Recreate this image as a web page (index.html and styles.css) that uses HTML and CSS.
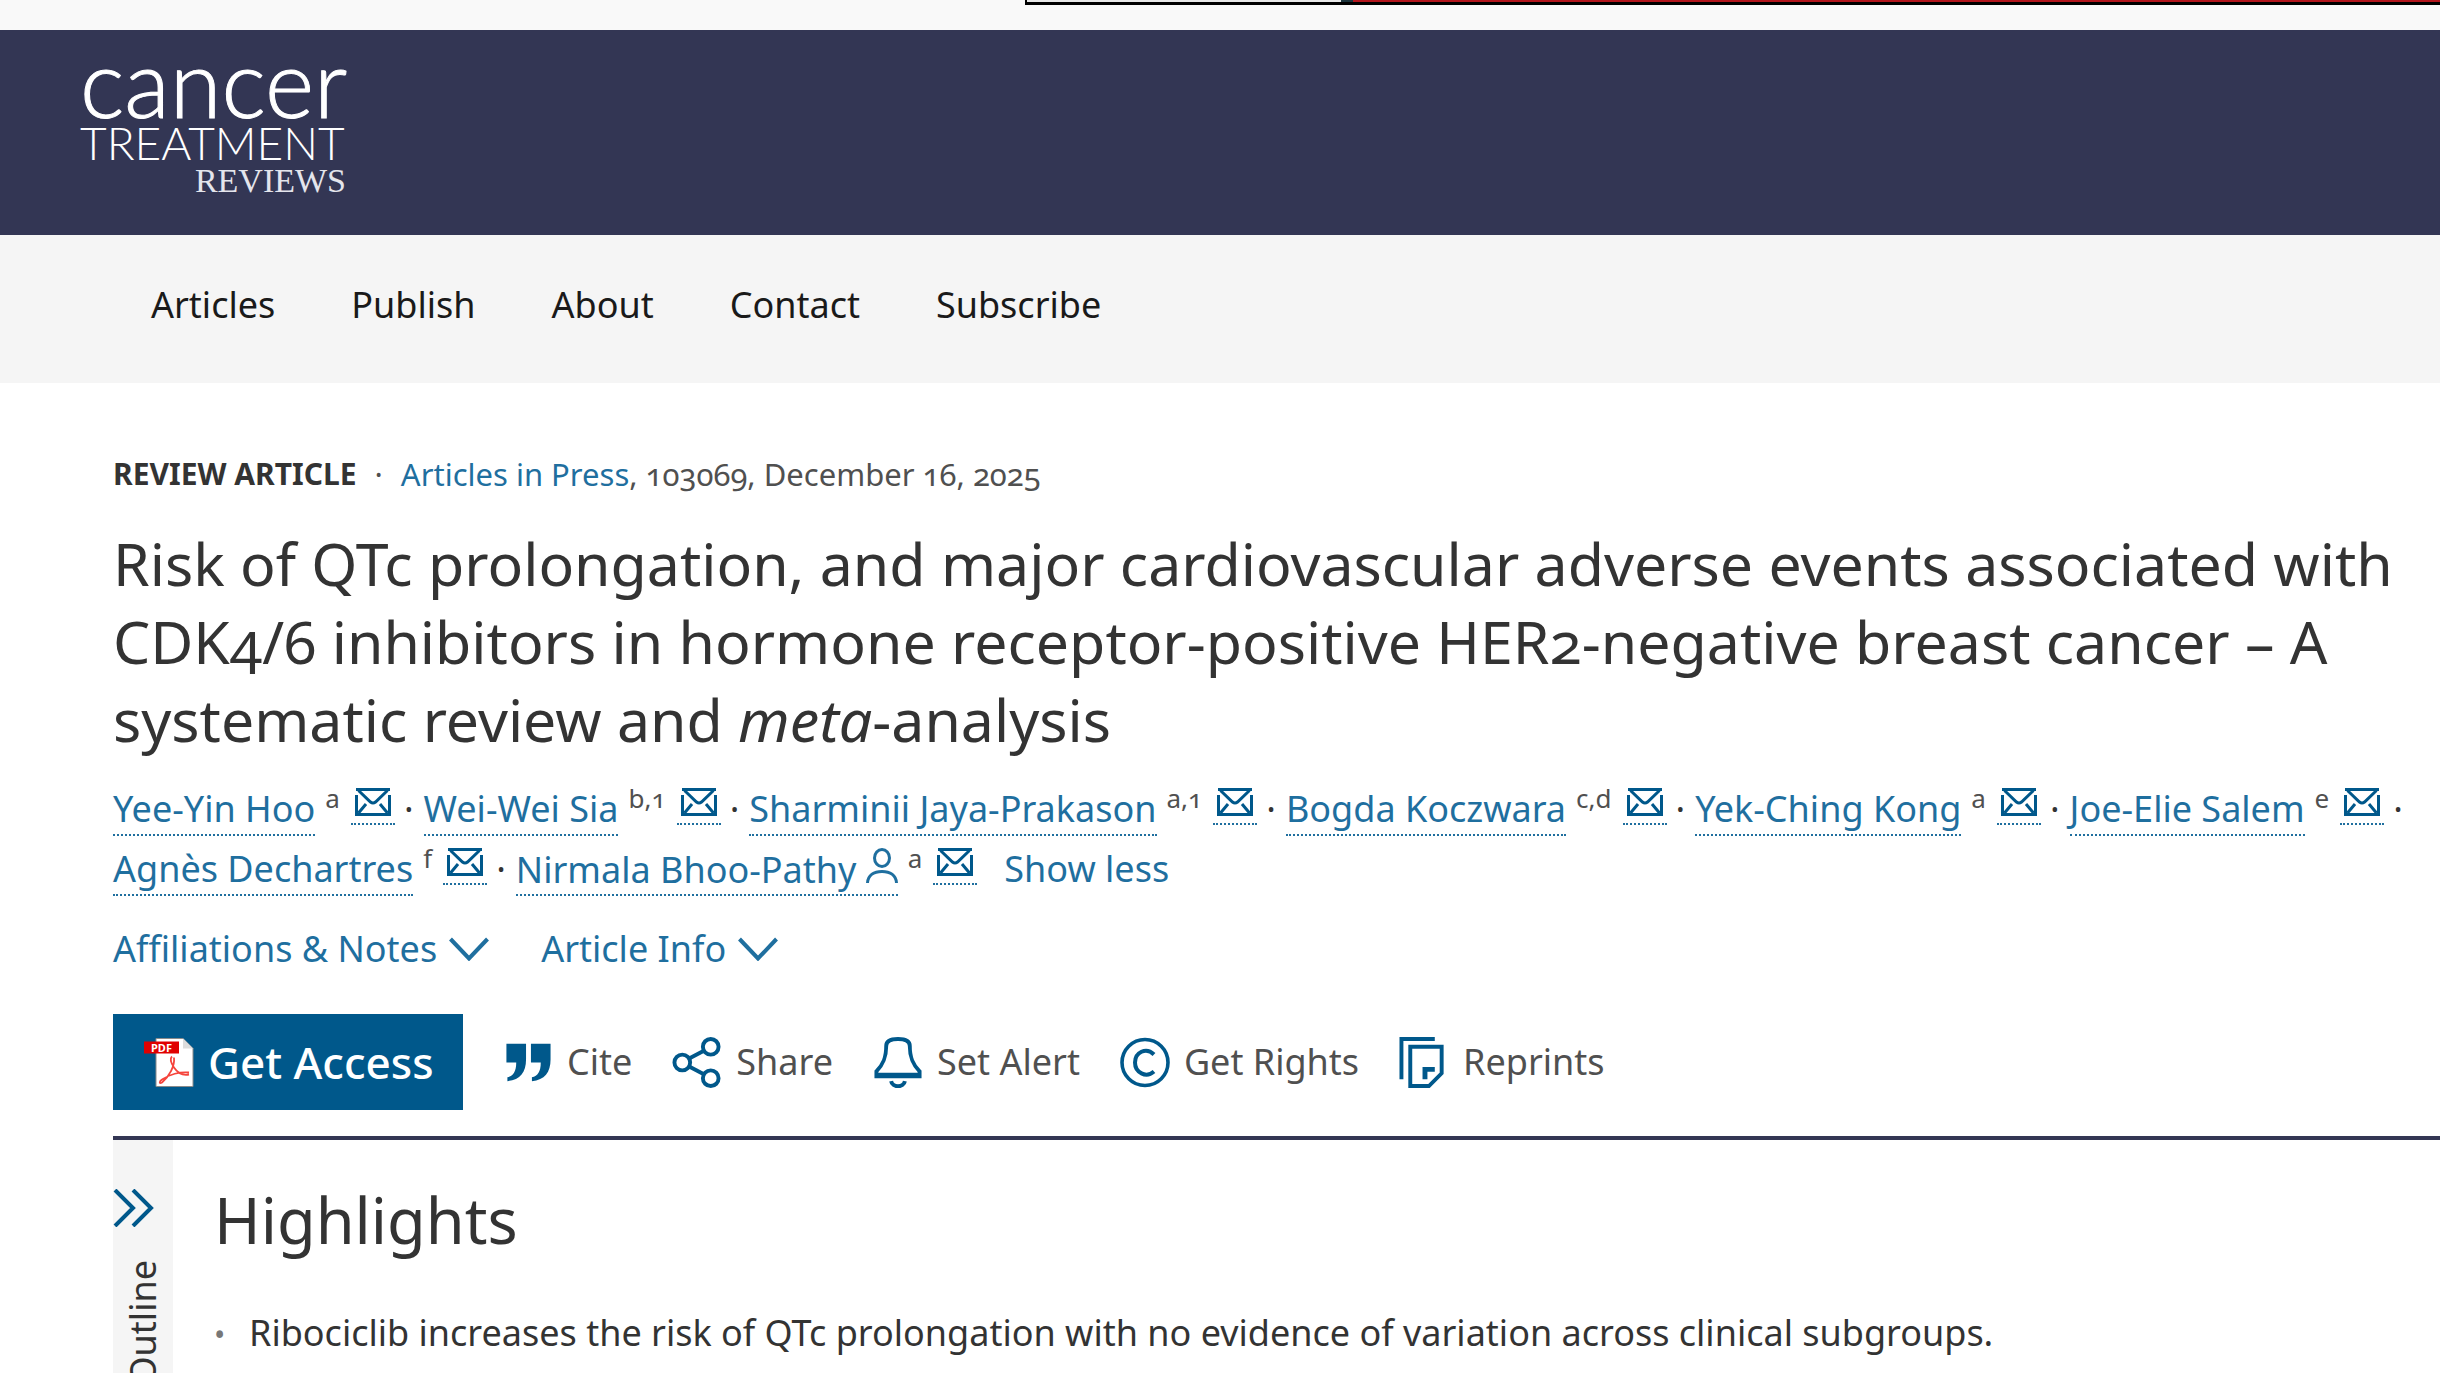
FILE: index.html
```html
<!DOCTYPE html>
<html lang="en">
<head>
<meta charset="utf-8">
<title>Cancer Treatment Reviews</title>
<link rel="stylesheet" href="styles.css">
</head>
<body>
<svg class="sprite" aria-hidden="true">
  <symbol id="mail" viewBox="0 0 36 28">
    <path d="M1.500 7v19.500h33V7M1 1.500h34M3.500 2.500 15.500 14q2.500 2 5 0L32.500 2.500M3.500 25 11 16M32.500 25 25 16" fill="none" stroke="currentColor" stroke-width="3"/>
  </symbol>
  <symbol id="person" viewBox="0 0 32 36">
    <ellipse cx="16" cy="10" rx="7.500" ry="8.500" fill="none" stroke="currentColor" stroke-width="3"/>
    <path d="M1.500 35C2 27 8 23.500 16 23.500S30 27 30.500 35" fill="none" stroke="currentColor" stroke-width="3"/>
  </symbol>
  <symbol id="chevron" viewBox="0 0 40 24">
    <path d="M1.500 2 20 21.500 38.500 2" fill="none" stroke="currentColor" stroke-width="4"/>
  </symbol>
</svg>
<div class="ad-strip"><div class="ad"><div class="ad-light"></div><div class="ad-dark"></div><div class="ad-red"></div></div></div>
<header class="masthead">
  <a class="logo" href="#"><span class="logo-cancer">cancer</span><span class="logo-treatment">TREATMENT</span><span class="logo-reviews">REVIEWS</span></a>
</header>
<nav class="menu">
  <a href="#">Articles</a><a href="#">Publish</a><a href="#">About</a><a href="#">Contact</a><a href="#">Subscribe</a>
</nav>
<main class="article">
  <p class="meta"><strong>REVIEW ARTICLE</strong><span class="meta-dot">·</span><span><a href="#">Articles in Press</a>, 103069, December 16, 2025</span></p>
  <h1>Risk of QTc prolongation, and major cardiovascular adverse events associated with CDK4/6 inhibitors in hormone receptor-positive HER2-negative breast cancer – A systematic review and <em>meta</em>-analysis</h1>
  <ul class="authors">
    <li><a class="name" href="#">Yee-Yin Hoo</a><sup>a</sup><a class="mail" href="#" aria-label="Email"><svg><use href="#mail"/></svg></a><span class="dot">·</span></li>
    <li><a class="name" href="#">Wei-Wei Sia</a><sup>b,1</sup><a class="mail" href="#" aria-label="Email"><svg><use href="#mail"/></svg></a><span class="dot">·</span></li>
    <li><a class="name" href="#">Sharminii Jaya-Prakason</a><sup>a,1</sup><a class="mail" href="#" aria-label="Email"><svg><use href="#mail"/></svg></a><span class="dot">·</span></li>
    <li><a class="name" href="#">Bogda Koczwara</a><sup>c,d</sup><a class="mail" href="#" aria-label="Email"><svg><use href="#mail"/></svg></a><span class="dot">·</span></li>
    <li><a class="name" href="#">Yek-Ching Kong</a><sup>a</sup><a class="mail" href="#" aria-label="Email"><svg><use href="#mail"/></svg></a><span class="dot">·</span></li>
    <li><a class="name" href="#">Joe-Elie Salem</a><sup>e</sup><a class="mail" href="#" aria-label="Email"><svg><use href="#mail"/></svg></a><span class="dot">·</span></li>
    <li><a class="name" href="#">Agnès Dechartres</a><sup>f</sup><a class="mail" href="#" aria-label="Email"><svg><use href="#mail"/></svg></a><span class="dot">·</span></li>
    <li><a class="name" href="#">Nirmala Bhoo-Pathy <svg class="person"><use href="#person"/></svg></a><sup>a</sup><a class="mail" href="#" aria-label="Email"><svg><use href="#mail"/></svg></a></li>
    <li class="less"><button type="button">Show less</button></li>
  </ul>
  <div class="toggles">
    <button type="button">Affiliations &amp; Notes<svg><use href="#chevron"/></svg></button>
    <button type="button">Article Info<svg><use href="#chevron"/></svg></button>
  </div>
  <div class="actions">
    <button type="button" class="access">
      <svg class="pdf" viewBox="0 0 50 50">
        <path d="M12 1h27l10 10v38H12z" fill="#fff" stroke="#8a8a8a"/>
        <path d="M39 1v10h10z" fill="#dcdcdc"/>
        <path d="M0 4h35v12H0z" fill="#e00000"/>
        <text x="7" y="14" font-size="11" font-weight="700" fill="#fff">PDF</text>
        <path d="M28 19c-3 3 0 8 2 11 4 6 10 8 15 7M30 20c1 9-5 19-12 25-3 2-3-1 0-3 7-5 18-8 27-7" fill="none" stroke="#f5443c" stroke-width="1.800"/>
      </svg>
      Get Access</button>
    <button type="button"><svg viewBox="-3 -7 50 52"><path d="M0 0h20v16C20 29 14 37 1 38v-4c6-1 9-6 9-15H0zM25 0h20v16C45 29 39 37 26 38v-4c6-1 9-6 9-15H25z" fill="currentColor"/></svg><span>Cite</span></button>
    <button type="button"><svg viewBox="0 0 50 52"><g fill="none" stroke="currentColor" stroke-width="4"><circle cx="10" cy="26" r="8"/><circle cx="39" cy="10" r="8"/><circle cx="39" cy="42" r="8"/><path d="M17 22l15-8M17 30l15 8"/></g></svg><span>Share</span></button>
    <button type="button"><svg viewBox="0 0 50 52"><g fill="none" stroke="currentColor" stroke-width="4"><path d="M13 9c0-5 4-7 12-7s12 2 12 7c0 12 3 19 10 26v5H3v-5C10 28 13 21 13 9zM2 38.500h46"/><path d="M18 45c1 7 13 7 14 0"/></g></svg><span>Set Alert</span></button>
    <button type="button"><svg viewBox="0 0 50 50"><g fill="none" stroke="currentColor" stroke-width="3.600"><circle cx="25" cy="25" r="23"/><path d="M34 17C26 9 15 15 15 25s11 16 19 9" stroke-width="4"/></g></svg><span>Get Rights</span></button>
    <button type="button"><svg viewBox="0 0 50 52"><g fill="none" stroke="currentColor" stroke-width="4"><path d="M2 43V2h34M11 10h32v27L30 50H11z"/><path d="M26 43V33h10" stroke-width="5"/></g></svg><span>Reprints</span></button>
  </div>
  <div class="content">
    <aside class="outline">
      <button type="button" aria-label="Expand outline"><svg viewBox="0 0 42 38"><path d="M2 1l18 18L2 37M20 1l18 18-18 18" fill="none" stroke="currentColor" stroke-width="4"/></svg></button>
      <span>Outline</span>
    </aside>
    <section class="highlights">
      <h2>Highlights</h2>
      <ul><li>Ribociclib increases the risk of QTc prolongation with no evidence of variation across clinical subgroups.</li></ul>
    </section>
  </div>
</main>
</body>
</html>
```
FILE: styles.css
```css
* { box-sizing: border-box; }
body {
  margin: 0;
  height: 100vh;
  overflow: hidden;
  background: #fff;
  color: #333;
  font: 36px/60px "Noto Sans", "Open Sans", sans-serif;
  font-variant-numeric: oldstyle-nums;
}
a { color: #1f6f9f; text-decoration: none; }
button {
  margin: 0;
  padding: 0;
  border: 0;
  background: none;
  color: #1f6f9f;
  font: inherit;
  cursor: pointer;
}
p, h1, h2, ul { margin: 0; padding: 0; font-weight: 400; }
li { list-style: none; }
.sprite { display: none; }

.ad-strip { height: 30px; padding-left: 42%; background: #f9f9f9; }
.ad { display: flex; height: 5px; border: solid #000; border-width: 0 0 3px 2px; }
.ad-light { flex: 0 0 314px; background: #e8e8e8; }
.ad-dark { flex: 0 0 12px; background: #1d343c; }
.ad-red { flex: 1; background: #b3161d; }

.masthead { display: flex; height: 205px; padding: 15px 80px; background: #333654; }
.logo { display: flex; flex-direction: column; width: 266px; color: #fff; font-family: Lato, sans-serif; font-weight: 300; }
.logo-cancer { font-size: 94px; line-height: 74px; -webkit-text-stroke: 1px #fff; }
.logo-treatment { font-size: 46px; line-height: 48px; }
.logo-reviews { align-self: flex-end; font: 34px/28px "Liberation Serif", serif; color: #e4e5ec; }

.menu { display: flex; gap: 76px; height: 148px; padding: 40px 151px; background: #f5f5f5; }
.menu a { color: #1a1a1a; }

.article { padding: 61px 0 0 113px; }
.meta { display: flex; gap: 18px; font-size: 31px; color: #505050; }
.meta strong { color: #333; font-size: 30px; }
h1 { padding-right: 40px; margin-top: 20px; font-size: 59px; line-height: 78px; }

.authors { display: flex; flex-wrap: wrap; padding-top: 21px; }
.authors li { display: flex; padding-right: 10px; }
.name { height: 48px; margin-top: 9px; line-height: 42px; border-bottom: 2px dotted #1f6f9f; }
.authors sup { margin: 0 11px 0 10px; font-size: 26px; line-height: 38px; color: #505050; }
.mail { height: 40px; margin-top: 6px; padding: 3px 4px 0; border-bottom: 2px dotted #1f6f9f; }
.mail svg { display: block; width: 36px; height: 28px; color: #00588b; }
.dot { padding-left: 9px; }
.person { width: 32px; height: 36px; vertical-align: -1px; }
.authors .less { padding-left: 17px; }

.toggles { display: flex; gap: 52px; padding-top: 20px; }
.toggles button { display: flex; align-items: center; gap: 12px; }
.toggles svg { width: 40px; height: 24px; }

.actions { display: flex; align-items: center; gap: 40px; padding: 35px 0 26px; }
.actions button { display: flex; align-items: center; gap: 14px; color: #00588b; }
.actions button span { color: #505050; }
.actions svg { width: 50px; height: 51px; }
.actions .access { height: 96px; width: 350px; padding-left: 31px; background: #00588b; color: #fff; font-size: 44px; font-weight: 500; }

.content { display: flex; border-top: 4px solid #333654; }
.outline { display: flex; flex-direction: column; width: 60px; padding-top: 46px; background: #f5f5f5; }
.outline button { height: 44px; text-align: left; color: #00588b; }
.outline svg { display: block; width: 42px; height: 38px; }
.outline span { margin-top: 30px; writing-mode: vertical-rl; transform: rotate(180deg); }
.highlights { padding: 40px 0 0 41px; }
.highlights h2 { font-size: 63px; line-height: 80px; }
.highlights li { display: flex; margin-top: 43px; }
.highlights li::before { content: "•"; width: 35px; font-size: 30px; line-height: 64px; color: #777; }
```
